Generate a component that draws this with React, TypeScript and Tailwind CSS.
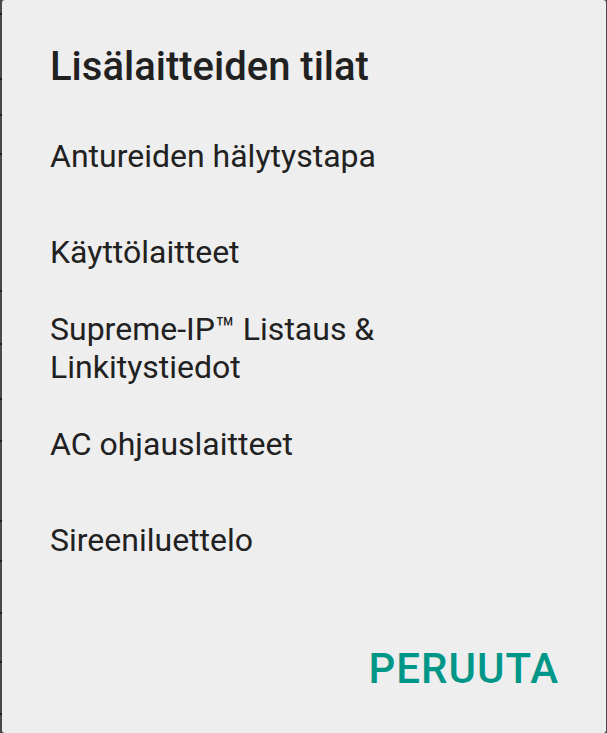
import React from "react";

const items = [
  "Antureiden hälytystapa",
  "Käyttölaitteet",
  "Supreme-IP™ Listaus & Linkitystiedot",
  "AC ohjauslaitteet",
  "Sireeniluettelo",
];

const marks = [13, 78, 114, 153, 290, 343, 398, 440, 520, 560, 612, 661, 713];

export default function App() {
  return (
    <div
      className="relative w-[607px] h-[733px] bg-[#4a4a4a] flex pl-[2px] pr-[1px] overflow-hidden"
      style={{ fontFamily: "Roboto, 'Noto Sans', sans-serif" }}
    >
      {marks.map((m) => (
        <div
          key={m}
          className="absolute left-0 w-[2px] h-[2px] bg-[#1e1e1e]"
          style={{ top: m }}
        />
      ))}
      <div className="flex-1 bg-[#eeeeee] rounded-[3px] flex flex-col">
        <div className="pl-[48px] pr-[48px] pt-[43px] text-[40px] leading-[47px] font-medium text-[#212121]">
          Lisälaitteiden tilat
        </div>
        <div className="mt-[18px] flex flex-col">
          {items.map((t) => (
            <div
              key={t}
              className="min-h-[96px] flex items-center pl-[48px] pr-[190px] py-[9px] text-[32px] leading-[38px] text-[#212121]"
            >
              {t}
            </div>
          ))}
        </div>
        <div className="flex-1 flex items-end justify-end pr-[47px] pb-[40px]">
          <div className="text-[42px] leading-[48px] font-medium text-[#009688] tracking-[1px]">
            PERUUTA
          </div>
        </div>
      </div>
    </div>
  );
}
